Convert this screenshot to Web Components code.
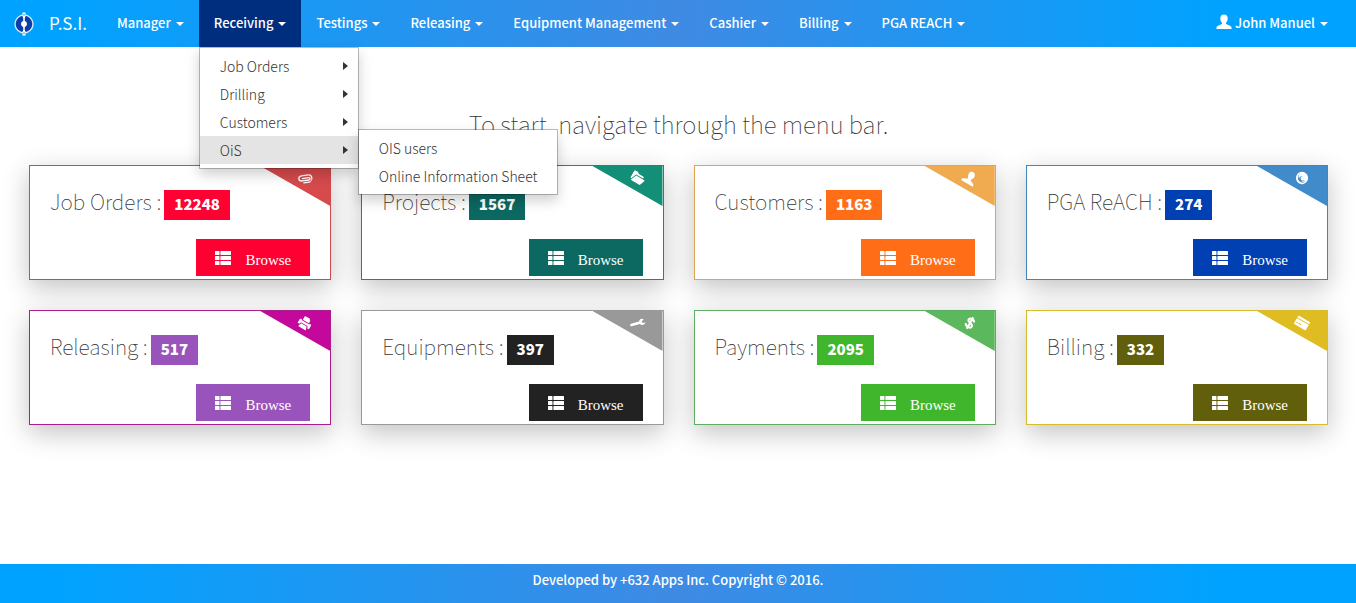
<!DOCTYPE html>
<html lang="en">
<head>
<meta charset="utf-8">
<title>P.S.I.</title>
<style>
  body {
    margin: 0;
    font-family: "Noto Sans CJK SC", "Open Sans", sans-serif;
    font-size: 14px;
    line-height: 20px;
    color: #333;
    background: #fff;
    --bar: linear-gradient(to right, #00a2ff 4%, #3f8ae3 50%, #00a2ff 90%);
  }
</style>
</head>
<body>
<psi-page>
  <psi-navbar slot="top">
    <nav-item>Manager</nav-item>
    <nav-item open>Receiving
      <drop-menu slot="menu">
        <menu-entry more>Job Orders</menu-entry>
        <menu-entry more>Drilling</menu-entry>
        <menu-entry more>Customers</menu-entry>
        <menu-entry more active>OiS
          <drop-menu slot="menu">
            <menu-entry>OIS users</menu-entry>
            <menu-entry>Online Information Sheet</menu-entry>
          </drop-menu>
        </menu-entry>
      </drop-menu>
    </nav-item>
    <nav-item>Testings</nav-item>
    <nav-item>Releasing</nav-item>
    <nav-item>Equipment Management</nav-item>
    <nav-item>Cashier</nav-item>
    <nav-item>Billing</nav-item>
    <nav-item>PGA REACH</nav-item>
    <nav-item slot="user" icon="user">John Manuel</nav-item>
  </psi-navbar>
  <stat-card count="12248" icon="clip" line="#cf4a4e" corner="#d64a4c" fill="#ff0033">Job Orders :</stat-card>
  <stat-card count="1567" icon="folder" line="#1f8574" corner="#128f76" fill="#0b6962">Projects :</stat-card>
  <stat-card count="1163" icon="user" line="#e0a458" corner="#f0aa50" fill="#ff6e16">Customers :</stat-card>
  <stat-card count="274" icon="globe" line="#4285b8" corner="#428bca" fill="#0040b3">PGA ReACH :</stat-card>
  <stat-card count="517" icon="print" line="#a81f8c" corner="#c4089b" fill="#9954bb">Releasing :</stat-card>
  <stat-card count="397" icon="wrench" line="#999" corner="#999" fill="#222">Equipments :</stat-card>
  <stat-card count="2095" icon="dollar" line="#5cae66" corner="#5cb85c" fill="#3fb62b">Payments :</stat-card>
  <stat-card count="332" icon="card" line="#d6bd30" corner="#dfbc22" fill="#625f0c">Billing :</stat-card>
  <psi-footer slot="bottom">Developed by +632 Apps Inc. Copyright © 2016.</psi-footer>
</psi-page>

<script>
const ICONS = {
  user: '<path d="M8 0.500c2.300 0 3.700 1.600 3.700 3.900 0 1.700-.7 3.300-1.700 4.200v1.200c.3.900 5.600 1.900 5.600 3.900v1.300H.4v-1.300c0-2 5.300-3 5.600-3.900V8.600c-1-.9-1.700-2.500-1.700-4.200C4.300 2.100 5.700.5 8 .5z"/>',
  list: '<path d="M.6 1h3.300q.6 0 .6.600v2.800q0 .6-.6.600H.6Q0 5 0 4.400V1.600Q0 1 .6 1zM6 1h9.400q.6 0 .6.600v2.800q0 .6-.6.600H6q-.6 0-.6-.6V1.600Q5.400 1 6 1zM.6 6h3.300q.6 0 .6.600v2.800q0 .6-.6.600H.6Q0 10 0 9.400V6.600Q0 6 .6 6zM6 6h9.400q.6 0 .6.600v2.800q0 .6-.6.600H6q-.6 0-.6-.6V6.600Q5.400 6 6 6zM.6 11h3.300q.6 0 .6.600v2.800q0 .6-.6.600H.6Q0 15 0 14.400v-2.800Q0 11 .6 11zM6 11h9.400q.6 0 .6.600v2.800q0 .6-.6.600H6q-.6 0-.6-.6v-2.800Q5.400 11 6 11z"/>',
  clip: '<g transform="rotate(-38 8 8)" fill="none" stroke="currentColor" stroke-width="1.500" stroke-linecap="round"><path d="M5 8.200h7.200c1.900 0 1.900 2.700 0 2.700H4.300C-.2 10.900-.2 5 4.300 5h8c4.700 0 4.700 8.400 0 8.400H6"/></g>',
  folder: '<path d="M0 3.200Q0 2 1.200 2h3.600l1.400 1.500h6Q13.400 3.500 13.400 4.700V5.600H4.200L1.600 12 0 12zM4.900 6.600H16.500l-2.800 7.400H1.800z"/>',
  globe: '<path fill-rule="evenodd" d="M8 1a7 7 0 1 1 0 14A7 7 0 0 1 8 1zM3.400 4.600c-1.600 4.300 1.200 8.200 5.400 8.200 2.300 0 4-1.400 4.300-3.300-1.200 1.800-3 2.500-4.800 1.900 2-.2 3.200-1.400 2.900-2.900-.4 1.700-2.400 2.300-3.700 1.300C6.100 8.800 6.400 7 7.900 6.200 5.600 6.200 4.600 8.500 5.500 10.400 3.400 9 2.900 6.800 3.400 4.600z"/>',
  print: '<path fill-rule="evenodd" d="M4.500 1h5.600L12 3v3H4V1.500zM2 6h1v1h10V6h1q1.500.3 1.500 1.800V12H13v-1.500l-1-1H4l-1 1V12H.5V7.800Q.5 6.300 2 6zM4.400 10.500h7.200L13 15H3z"/>',
  wrench: '<path d="M15.800 4.200 13 6.100l-1.800-1.600 1.300-2.600C9.700 1.200 8 3.400 8.500 5.800L.8 11.700c-1.400 1.200.4 3.600 1.900 2.500l7.700-5.800c2.700.9 5.500-1.200 5.400-4.200z" transform="rotate(-8 8 8)"/>',
  dollar: '<path fill="none" stroke="currentColor" stroke-width="2.400" d="M11.500 5.300C11.200 3.800 9.800 3 8 3c-2 0-3.400.9-3.400 2.300 0 3.500 7.200 1.700 7.200 5.200 0 1.500-1.500 2.500-3.800 2.500-2.200 0-3.600-.9-3.900-2.600M8 .4v15.200"/>',
  card: '<path fill-rule="evenodd" d="M1 2.500h14q1 0 1 1V5H0V3.500q0-1 1-1zM0 6h16v6.500q0 1-1 1H1q-1 0-1-1zM2 9.500v1.300h2V9.500zm3 0v1.300h3V9.500z"/>'
};
const svg = name => `<svg viewBox="0 0 16 16" fill="currentColor" aria-hidden="true">${ICONS[name]}</svg>`;

function define(tag, render) {
  customElements.define(tag, class extends HTMLElement {
    constructor() {
      super();
      this.attachShadow({ mode: 'open' });
    }
    connectedCallback() {
      this.shadowRoot.innerHTML = render(this);
    }
  });
}

define('psi-page', () => `
  <style>
    :host { display: flex; flex-direction: column; min-height: 100vh; }
    main { flex: 1; padding: 59px 28px 30px 29px; }
    h1 { margin: 0 0 23px; font-size: 24px; line-height: 36px; font-weight: 100; text-align: center; }
    .cards { display: grid; grid-template-columns: repeat(4, 1fr); gap: 30px; }
  </style>
  <slot name="top"></slot>
  <main>
    <h1>To start, navigate through the menu bar.</h1>
    <div class="cards"><slot></slot></div>
  </main>
  <slot name="bottom"></slot>`);

define('psi-navbar', () => `
  <style>
    :host { display: block; background: var(--bar); color: #fff; position: relative; z-index: 2; }
    nav { display: flex; align-items: stretch; padding: 0 13px; height: 47px; }
    .brand { display: flex; align-items: center; gap: 14px; margin-right: 15px; color: inherit; text-decoration: none; font-size: 17px; }
    .brand svg { width: 22px; height: 24px; }
    .brand span { padding-bottom: 2px; }
    .user { display: flex; margin-left: auto; }
  </style>
  <nav>
    <a class="brand" href="#">
      <svg viewBox="0 0 22 24" aria-hidden="true">
        <circle cx="11" cy="12" r="9" fill="#0b3fa8" stroke="#cfe6fb" stroke-width="1.400"/>
        <path d="M9.500 0.500h3v4l-.7 1.500v3c1.300.4 2.200 1.600 2.200 3s-.9 2.600-2.200 3v3l.7 1.500v4h-3v-4l.7-1.500v-3C8.900 14.600 8 13.400 8 12s.9-2.600 2.200-3V6l-.7-1.500z" fill="#fff"/>
        <path d="M10.300 2h1.400v1.500h-1.400zM10.300 20.500h1.400V22h-1.400z" fill="#3b9be8"/>
      </svg>
      <span>P.S.I.</span>
    </a>
    <slot></slot>
    <div class="user"><slot name="user"></slot></div>
  </nav>`);

define('nav-item', el => `
  <style>
    :host { display: flex; position: relative; }
    button { display: flex; align-items: center; gap: 5px; border: 0; padding: 0 15px 1px; background: none; color: inherit; font: inherit; font-size: 13px; font-weight: 500; white-space: nowrap; cursor: pointer; }
    :host([open]) button { background: #002e7f; }
    .icon { display: flex; }
    .icon svg { width: 16px; height: 16px; margin: 0 -2px 2px 0; }
    .caret { border: 4px solid transparent; border-top-color: currentColor; border-bottom: 0; margin-top: 2px; }
  </style>
  <button type="button" aria-haspopup="true" aria-expanded="${el.hasAttribute('open')}">
    ${el.hasAttribute('icon') ? `<span class="icon">${svg(el.getAttribute('icon'))}</span>` : ''}
    <span><slot></slot></span><span class="caret"></span>
  </button>
  <slot name="menu"></slot>`);

define('drop-menu', () => `
  <style>
    :host { display: block; position: absolute; top: 100%; left: 0; box-sizing: border-box; min-width: 160px; padding: 4px 0; border: 1px solid rgba(0,0,0,.25); background: #fff; background-clip: padding-box; color: #333; box-shadow: 0 6px 12px rgba(0,0,0,.18); }
  </style>
  <div role="menu"><slot></slot></div>`);

define('menu-entry', el => `
  <style>
    :host { display: block; position: relative; }
    :host([active]) { background: #e4e4e4; }
    a { display: flex; align-items: center; justify-content: space-between; padding: 4px 10px 4px 20px; color: inherit; text-decoration: none; white-space: nowrap; font-weight: 300; }
    a:not(.more) { padding-right: 20px; }
    .arrow { border: 4px solid transparent; border-left: 5px solid #333; border-right: 0; }
    ::slotted(drop-menu) { top: -7px; left: 100%; }
  </style>
  <a href="#" role="menuitem" class="${el.hasAttribute('more') ? 'more' : ''}"><span><slot></slot></span>${el.hasAttribute('more') ? '<span class="arrow"></span>' : ''}</a>
  <slot name="menu"></slot>`);

define('stat-card', el => `
  <style>
    :host { display: block; position: relative; padding: 24px 20px 3px; border: 1px solid ${el.getAttribute('line')}; background: #fff; box-shadow: 0 8px 25px rgba(0,0,0,.24); }
    .head { display: flex; align-items: flex-start; gap: 3px; margin-bottom: 19px; }
    h2 { margin: 0; font-size: 21px; line-height: 22px; font-weight: 100; white-space: nowrap; }
    .count { padding: 4px 10px 6px; background: ${el.getAttribute('fill')}; color: #fff; font-size: 15px; font-weight: 900; line-height: 20px; }
    .foot { display: flex; justify-content: flex-end; }
    button { display: flex; align-items: center; gap: 14px; height: 37px; border: 0; padding: 0 19px; background: ${el.getAttribute('fill')}; color: #fff; font: 15px/20px "Liberation Serif", serif; cursor: pointer; }
    button svg { width: 16px; height: 16px; }
    button span { padding-top: 4px; }
    .corner { position: absolute; top: 0; right: 0; width: 70px; height: 40px; background: ${el.getAttribute('corner')}; clip-path: polygon(0 0, 100% 0, 100% 100%); color: #fff; }
    .corner svg { position: absolute; top: 5px; right: 18px; width: 14px; height: 14px; transform: rotate(30deg); }
  </style>
  <div class="corner">${svg(el.getAttribute('icon'))}</div>
  <div class="head"><h2><slot></slot></h2><span class="count">${el.getAttribute('count')}</span></div>
  <div class="foot"><button type="button">${svg('list')}<span>Browse</span></button></div>`);

define('psi-footer', () => `
  <style>
    :host { display: block; padding: 6px 0 13px; background: var(--bar); color: #fff; text-align: center; font-size: 13px; font-weight: 500; }
  </style>
  <footer><slot></slot></footer>`);
</script>
</body>
</html>
